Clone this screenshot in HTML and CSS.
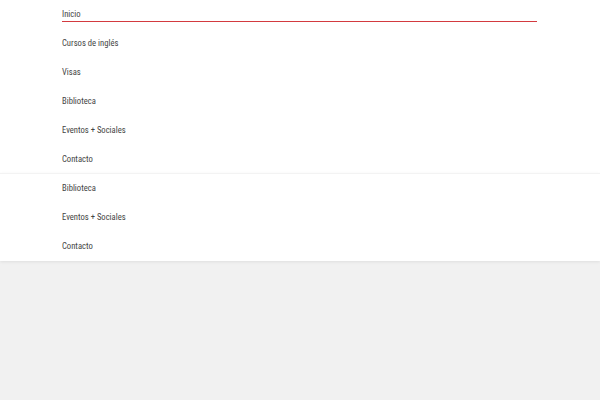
FILE: index.html
```html
<!DOCTYPE html>
<html lang="es">
<head>
  <meta charset="UTF-8" />
  <meta name="viewport" content="width=device-width, initial-scale=1.0" />
  <title>Menú</title>
  <link rel="stylesheet" href="styles.css">
</head>
<body>
  <nav class="panel">
    <ul class="menu">
      <li><a class="active" href="#">Inicio</a></li>
      <li><a href="#">Cursos de inglés</a></li>
      <li><a href="#">Visas</a></li>
      <li><a href="#">Biblioteca</a></li>
      <li><a href="#">Eventos + Sociales</a></li>
      <li><a href="#">Contacto</a></li>
    </ul>
  </nav>
  <nav class="panel second">
    <ul class="menu">
      <li><a href="#">Biblioteca</a></li>
      <li><a href="#">Eventos + Sociales</a></li>
      <li><a href="#">Contacto</a></li>
    </ul>
  </nav>
</body>
</html>
```
FILE: styles.css
```css
* { box-sizing: border-box; margin: 0; padding: 0; }

body {
  font-family: "Roboto Condensed", Roboto, "Liberation Sans", sans-serif;
  background: #f1f1f1;
  height: 100vh;
}

.panel {
  background: #fff;
  position: relative;
  box-shadow: 0 1px 3px rgba(0,0,0,0.08);
}

.panel.second {
  margin-top: -1px;
  border-top: 1px solid #f3f3f3;
}

.menu {
  list-style: none;
  padding: 0 63px 0 62px;
}

.menu li {
  height: 29px;
}

.menu a {
  display: block;
  padding-top: 8px;
  line-height: 13px;
  font-size: 8.6px;
  font-stretch: condensed;
  color: #444;
  text-decoration: none;
}

.menu a.active {
  border-bottom: 1px solid #d33a3f;
}
```
